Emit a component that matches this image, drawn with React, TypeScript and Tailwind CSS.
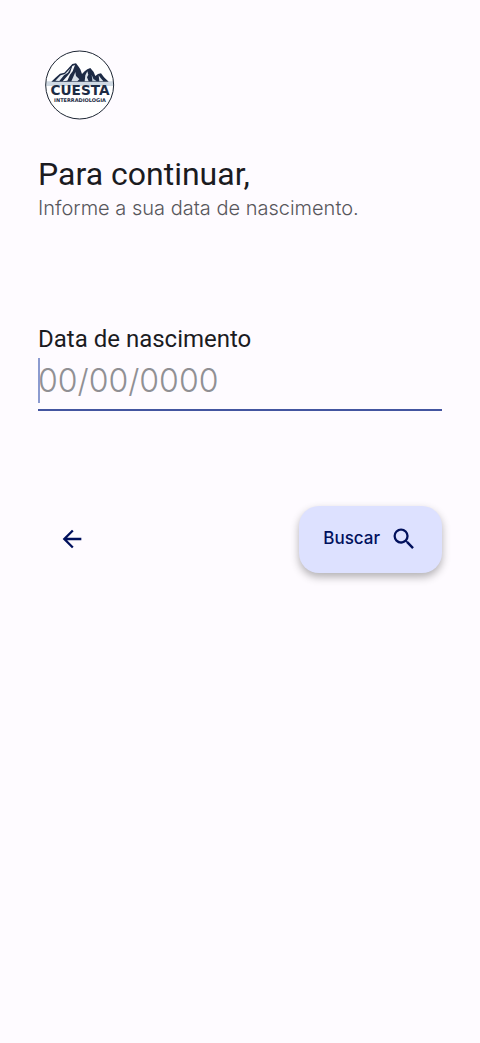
import { useState } from 'react';
import type { ChangeEvent, FormEvent } from 'react';
import { MdArrowBack, MdSearch } from 'react-icons/md';

function Logo() {
  return (
    <svg viewBox="0 0 240 240" className="size-20" role="img" aria-label="Cuesta Interradiologia">
      <defs>
        <clipPath id="logo-clip">
          <circle cx="119" cy="117" r="101" />
        </clipPath>
      </defs>
      <circle cx="119" cy="117" r="102" fill="#fff" />
      <g clipPath="url(#logo-clip)">
        <path d="M14 106h210v14H14z" fill="#cfd9e3" />
        {/* silhouette */}
        <path
          d="M34 107 48 94 60 83 73 80 84 68 97 54 108 52 116 62 121 70 126 84 134 76 142 70 151 66 161 78 166 90 174 84 183 82 192 94 206 107z"
          fill="#1d2b45"
        />
        {/* snow */}
        <path d="M46 104 62 88 75 84 92 66 84 80 72 88 58 105z" fill="#e6edf3" />
        <path d="M97 60 105 57 98 76 90 86 82 104 68 106 80 92 90 80z" fill="#f4f7fa" />
        <path d="M106 78 108 90 118 100 112 106 94 106 100 92z" fill="#d5dee7" />
        <path d="M142 76 145 86 141 94 146 106 134 106 136 88z" fill="#dde5ec" />
        <path d="M155 86 160 98 170 106 157 106z" fill="#b9c6d3" />
        <path d="M176 88 180 94 190 106 178 106z" fill="#dde5ec" />
      </g>
      <circle cx="119" cy="117" r="102" fill="none" stroke="#1d2633" strokeWidth="3" />
      <text
        x="120"
        y="148"
        textAnchor="middle"
        fontFamily="DejaVu Sans, sans-serif"
        fontWeight="700"
        fontSize="41"
        fill="#1d2c44"
      >
        CUESTA
      </text>
      <text
        x="120"
        y="167"
        textAnchor="middle"
        fontFamily="DejaVu Sans, sans-serif"
        fontWeight="700"
        fontSize="15"
        fill="#1d2c44"
      >
        INTERRADIOLOGIA
      </text>
    </svg>
  );
}

// dd/mm/aaaa
function formatDate(value: string) {
  const digits = value.replace(/\D/g, '').slice(0, 8);
  return [digits.slice(0, 2), digits.slice(2, 4), digits.slice(4)].filter(Boolean).join('/');
}

export default function App() {
  const [birthDate, setBirthDate] = useState('');

  const handleChange = (e: ChangeEvent<HTMLInputElement>) => {
    setBirthDate(formatDate(e.target.value));
  };

  const handleSubmit = (e: FormEvent) => {
    e.preventDefault();
  };

  return (
    <main className="min-h-screen bg-[#fefbff] px-[38px] pt-[46px] font-['Inter','Liberation_Sans',sans-serif]">
      <header>
        <div className="pl-[2px]">
          <Logo />
        </div>
        <h1 className="mt-7 font-['Roboto',sans-serif] text-[32px] leading-10 text-[#1b1b1f]">Para continuar,</h1>
        <p className="text-[20px] leading-7 font-light text-[#58575c]">Informe a sua data de nascimento.</p>
      </header>

      <form onSubmit={handleSubmit} className="mt-[101px]">
        <label
          htmlFor="birth-date"
          className="block font-['Roboto',sans-serif] text-[24px] leading-8 text-[#1b1b1f]"
        >
          Data de nascimento
        </label>
        <div className="relative border-b-2 border-[#4355a0]">
          <input
            id="birth-date"
            type="text"
            inputMode="numeric"
            value={birthDate}
            onChange={handleChange}
            placeholder="00/00/0000"
            className="block h-[54px] w-full bg-transparent pb-1 text-[32px] font-light text-[#1b1b1f] caret-[#8c9bd0] outline-none placeholder:text-[#909094]"
          />
          {!birthDate && <span className="absolute top-[3px] left-0 h-[45px] w-[2px] bg-[#8c9bd0]" />}
        </div>

        <div className="mt-[94px] flex items-center justify-between">
          <button type="button" aria-label="Voltar" className="p-5 text-[#00105c]">
            <MdArrowBack className="size-7" />
          </button>
          <button
            type="submit"
            className="flex h-[67px] items-center gap-[10px] rounded-[20px] bg-[#dde1ff] px-6 text-[17px] font-medium text-[#00105c] shadow-[0_4px_8px_rgba(0,0,0,0.3)]"
          >
            Buscar
            <MdSearch className="size-7" />
          </button>
        </div>
      </form>
    </main>
  );
}
